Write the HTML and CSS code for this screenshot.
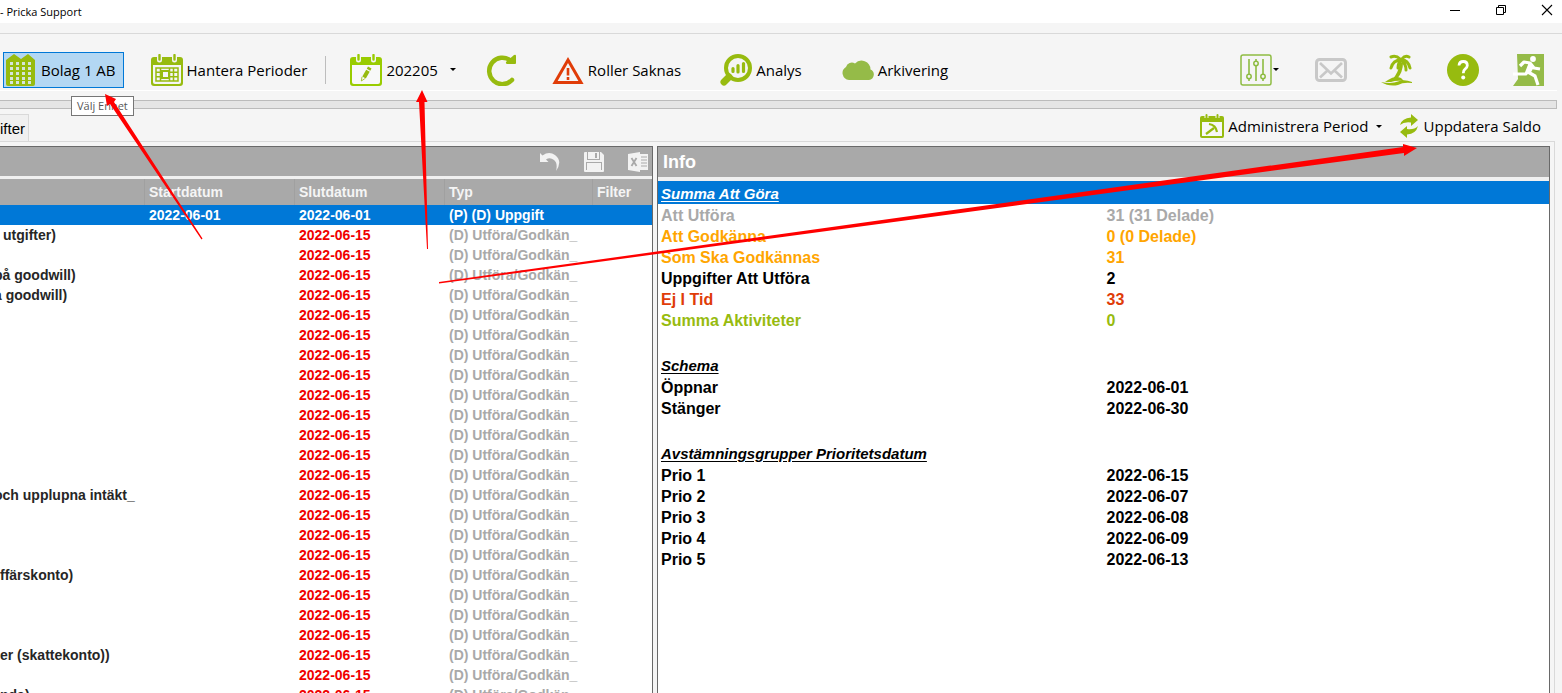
FILE: index.html
```
<!DOCTYPE html>
<html lang="sv">
<head>
<meta charset="utf-8">
<title>Pricka Support</title>
<link rel="stylesheet" href="styles.css">
</head>
<body>
<header class="titlebar">
  <span class="title">- Pricka Support</span>
  <div class="window-buttons">
    <button aria-label="Minimera"><svg width="12" height="12" viewBox="0 0 12 12"><path d="M1 6.500h10" stroke="#000"/></svg></button>
    <button aria-label="Återställ"><svg width="12" height="12" viewBox="0 0 12 12" fill="none" stroke="#000"><path d="M1.500 3.500h7v7h-7zM3.500 3.500v-2h7v7h-2"/></svg></button>
    <button aria-label="Stäng"><svg width="12" height="12" viewBox="0 0 12 12"><path d="M1 1l10 10M11 1L1 11" stroke="#000" stroke-width="1.100"/></svg></button>
  </div>
</header>
<div class="menu-strip"></div>
<nav class="toolbar">
  <div class="tools">
    <button class="tool active">
      <svg width="32" height="32" viewBox="0 0 32 32"><path fill="#97bb0f" d="M1 6l8-6 7 5 7-5 7 6v24q0 2-2 2H3q-2 0-2-2z"/><path d="M5 9.500h24M5 14.500h24M5 19.500h24M5 24.500h24M5 28.500h24" stroke="#d5e5dc" stroke-width="3" stroke-dasharray="3 3"/></svg>
      <span>Bolag 1 AB</span>
    </button>
    <button class="tool periods">
      <svg width="32" height="32" viewBox="0 0 32 32"><path fill="#97bb0f" d="M3 3h26q3 0 3 3v23q0 3-3 3H3q-3 0-3-3V6q0-3 3-3z"/><path fill="#f5f5f5" d="M2 11h28v17q0 2-2 2H4q-2 0-2-2z"/><path d="M8.500 1v5M23.500 1v5" stroke="#f5f5f5" stroke-width="5" stroke-linecap="round"/><path d="M8.500 1v4.500M23.500 1v4.500" stroke="#97bb0f" stroke-width="2.400" stroke-linecap="round"/><path fill="none" stroke="#97bb0f" stroke-width="1.500" d="M5 14h22v13H5zM5 18.300h22M5 22.700h22M9.500 14v13M22.500 14v13M18.500 14v13"/><path fill="#f5f5f5" stroke="#97bb0f" stroke-width="2" d="M11 17h7v7h-7z"/></svg>
      <span>Hantera Perioder</span>
    </button>
    <span class="divider"></span>
    <button class="tool month">
      <svg width="32" height="32" viewBox="0 0 32 32"><path fill="#99cc00" d="M3 3h26q3 0 3 3v23q0 3-3 3H3q-3 0-3-3V6q0-3 3-3z"/><path fill="#f8f8f8" d="M2 11h28v17q0 2-2 2H4q-2 0-2-2z"/><path d="M8.500 1v5M23.500 1v5" stroke="#f5f5f5" stroke-width="5" stroke-linecap="round"/><path d="M8.500 1v4.500M23.500 1v4.500" stroke="#99cc00" stroke-width="2.400" stroke-linecap="round"/><path fill="#97bb0f" d="M18 12.500l3.500 2-1.200 2.200-3.500-2zM16.200 15.800l3.500 2-3.900 6.600-3.500-2z"/><path fill="none" stroke="#97bb0f" stroke-width=".8" d="M12 22.800l-.7 4.200 3.600-2.400"/></svg>
      <span>202205</span>
      <i class="caret"></i>
    </button>
    <button class="tool reload" aria-label="Uppdatera"><svg width="32" height="32" viewBox="0 0 32 32"><path d="M24.500 6.500A13.200 13.200 0 1 0 26 26" fill="none" stroke="#97bb0f" stroke-width="4.500" stroke-linecap="round"/><path fill="#97bb0f" d="M28 1q2-1 2 1v7q0 1-1 1h-8q-2-1-.5-2.500z"/></svg></button>
    <button class="tool roles">
      <svg width="32" height="32" viewBox="0 0 32 32"><path d="M16 6L29 28.500H3z" fill="none" stroke="#e03c08" stroke-width="3"/><path d="M16 14v7.500M16 23v3" stroke="#e03c08" stroke-width="2.600"/></svg>
      <span>Roller Saknas</span>
    </button>
    <button class="tool analysis">
      <svg width="32" height="32" viewBox="0 0 32 32"><circle cx="18" cy="14" r="12" fill="none" stroke="#97bb0f" stroke-width="4"/><path d="M9 23l-5 5" stroke="#97bb0f" stroke-width="7" stroke-linecap="round"/><path d="M13 14.500v3M18 11.500v6.500M23.500 9.500v8" stroke="#97bb0f" stroke-width="3.200" stroke-linecap="round"/></svg>
      <span>Analys</span>
    </button>
    <button class="tool archive">
      <svg width="32" height="32" viewBox="0 0 32 32"><path fill="#95bb48" d="M7 26a7 7 0 0 1-3-13A6 6 0 0 1 13 9.500a9 9 0 0 1 15.500 6A5.500 5.500 0 0 1 27 26z"/></svg>
      <span>Arkivering</span>
    </button>
  </div>
  <div class="tools right">
    <button class="tool sliders" aria-label="Inställningar"><svg width="32" height="32" viewBox="0 0 32 32" fill="none" stroke="#8ebc42"><rect x="1" y="1" width="30" height="30" rx="2" stroke-width="1.500"/><path d="M9 5v15M9 25v2M16 5v2M16 12v15M23 5v15M23 25v2" stroke-width="1.600"/><g stroke-width="1.500"><circle cx="9" cy="22.500" r="2.200"/><circle cx="16" cy="9.500" r="2.200"/><circle cx="23" cy="22.500" r="2.200"/></g></svg><i class="caret"></i></button>
    <button class="tool" aria-label="Meddelanden"><svg width="32" height="32" viewBox="0 0 32 32"><rect x="1.500" y="5.500" width="29" height="21" rx="3" fill="none" stroke="#c8c8c8" stroke-width="3"/><path d="M5 9l11 10.500L27 9M5 23.500l7.500-7M27 23.500l-7.500-7" fill="none" stroke="#c8c8c8" stroke-width="2.600"/></svg></button>
    <button class="tool" aria-label="Frånvaro"><svg width="32" height="32" viewBox="0 0 32 32"><path fill="none" stroke="#97bb0f" stroke-width="3" stroke-linecap="round" d="M20 6Q12 6 10 14M21 6q6 0 8 8M19 5q-4-4-9-2M21 5q3-4 7-2M20 6q-3 3-3 8M21 7q4 3 4 9"/><path fill="#97bb0f" d="M19 8l3 1q0 9-6 16l-5 1q7-8 8-18z"/><path fill="#97bb0f" d="M7 26q7-5 13-2l3 3q-8-1-13 1H4zM0 28q11 2 17-.5t14 .5v1q-9-1-14 2-9 2-17-3z"/></svg></button>
    <button class="tool" aria-label="Hjälp"><svg width="32" height="32" viewBox="0 0 32 32"><circle cx="16" cy="16" r="16" fill="#97bb0f"/><path d="M12 11.500q.3-4 4.300-4 4 0 4 4 0 2-2.300 3.700-1.700 1.300-1.700 4" fill="none" stroke="#fff" stroke-width="2.800"/><circle cx="16.200" cy="23.500" r="2" fill="#fff"/></svg></button>
    <button class="tool exit" aria-label="Avsluta"><svg width="32" height="32" viewBox="0 0 32 32"><path fill="#95bb48" d="M4 0h27v32H0l5-7z"/><circle cx="20" cy="5" r="2.900" fill="#fff"/><path d="M7 12l4-4 6 1 4 5 6 1M17 10l-4 10H0M15 18l7 4 3 9" fill="none" stroke="#fff" stroke-width="3.200" stroke-linejoin="round"/><path d="M16 9l-3 9 4 2 4-7z" fill="#fff"/></svg></button>
  </div>
  <div class="tooltip" role="tooltip">Välj Enhet</div>
</nav>
<div class="splitter"></div>
<div class="tabstrip">
  <button class="tab">ifter</button>
  <div class="tab-tools">
    <button class="tool admin">
      <svg width="24" height="24" viewBox="0 0 24 24"><path fill="#97bb0f" d="M2 2h20q2 0 2 2v18q0 2-2 2H2q-2 0-2-2V4q0-2 2-2z"/><path fill="#f7f7f7" d="M2 8h20v14H2z"/><path d="M6.500 0v4M17.500 0v4" stroke="#f5f5f5" stroke-width="4"/><path d="M6.500 1v3M17.500 1v3" stroke="#97bb0f" stroke-width="2" stroke-linecap="round"/><path d="M6 20l8-6M9 10q7 1 8 8" fill="none" stroke="#97bb0f" stroke-width="2.200"/></svg>
      <span>Administrera Period</span>
      <i class="caret"></i>
    </button>
    <button class="tool">
      <svg width="20" height="24" viewBox="0 0 20 24"><path fill="#97bb0f" d="M12 0l7 6-7 6V8.500Q5 7.500 1 11 3 4 12 3.500zM8 24l-7-6 7-6v3q7 1 11-3-2 8-11 8.500z"/></svg>
      <span>Uppdatera Saldo</span>
    </button>
  </div>
</div>
<main class="page">
  <section class="panel">
    <div class="panel-bar icons">
      <button aria-label="Ångra"><svg width="20" height="20" viewBox="0 0 20 20"><path fill="#f2f2f2" d="M0 1l2.500 2.500Q9-1 15 3q8 6 1 16 2-8-2-11-4-3-8-.5L8.500 10H0z"/></svg></button>
      <button aria-label="Spara"><svg width="20" height="20" viewBox="0 0 20 20"><path fill="#f2f2f2" d="M0 1q0-1 1-1h16l3 3v16q0 1-1 1H1q-1 0-1-1z"/><path fill="#a9a9a9" d="M3 0h13v8H3zM2 10h16v8H2z"/><path fill="#f2f2f2" d="M4 0h11v7H4zM3 11h14v7H3z"/><path fill="#a9a9a9" d="M11 1h2v5h-2z"/></svg></button>
      <button aria-label="Exportera till Excel"><svg width="20" height="20" viewBox="0 0 20 20"><path fill="#f2f2f2" d="M0 2l12-2v20L0 18zM12 2h8v16h-8z"/><path d="M3.500 6l5 8M8.500 6l-5 8" stroke="#a9a9a9" stroke-width="1.800"/><path d="M13 5h6M13 8h6M13 11h6M13 14h6" stroke="#a9a9a9" stroke-width="1.200"/></svg></button>
    </div>
    <table class="tasks">
      <colgroup><col><col class="c-date"><col class="c-date"><col class="c-type"><col class="c-filter"></colgroup>
      <thead><tr><th></th><th>Startdatum</th><th>Slutdatum</th><th>Typ</th><th>Filter</th></tr></thead>
      <tbody id="rows"></tbody>
    </table>
  </section>
  <section class="panel info">
    <h1 class="panel-bar">Info</h1>
    <h2 class="selected"><span>Summa Att Göra</span></h2>
    <dl>
      <div class="gray"><dt>Att Utföra</dt><dd>31 (31 Delade)</dd></div>
      <div class="orange"><dt>Att Godkänna</dt><dd>0 (0 Delade)</dd></div>
      <div class="orange"><dt>Som Ska Godkännas</dt><dd>31</dd></div>
      <div><dt>Uppgifter Att Utföra</dt><dd>2</dd></div>
      <div class="late"><dt>Ej I Tid</dt><dd>33</dd></div>
      <div class="green"><dt>Summa Aktiviteter</dt><dd>0</dd></div>
    </dl>
    <h2><span>Schema</span></h2>
    <dl>
      <div><dt>Öppnar</dt><dd>2022-06-01</dd></div>
      <div><dt>Stänger</dt><dd>2022-06-30</dd></div>
    </dl>
    <h2><span>Avstämningsgrupper Prioritetsdatum</span></h2>
    <dl>
      <div><dt>Prio 1</dt><dd>2022-06-15</dd></div>
      <div><dt>Prio 2</dt><dd>2022-06-07</dd></div>
      <div><dt>Prio 3</dt><dd>2022-06-08</dd></div>
      <div><dt>Prio 4</dt><dd>2022-06-09</dd></div>
      <div><dt>Prio 5</dt><dd>2022-06-13</dd></div>
    </dl>
  </section>
</main>
<svg class="arrows" width="1562" height="693" viewBox="0 0 1562 693" fill="#f00">
  <path d="M105 94l2 12 3-2L201.500 239.500l1-1L114 102l2-3z"/>
  <path d="M422 90l-6 12h3L427 249h1L424.500 102h3z"/>
  <path d="M1417 148l-14-4v3L439 282v1.500L1404 153v3z"/>
</svg>
<script src="tasks.js"></script>
</body>
</html>
```
FILE: styles.css
```
* { box-sizing: border-box; }
body {
  margin: 0;
  height: 100vh;
  overflow: hidden;
  display: flex;
  flex-direction: column;
  position: relative;
  background: #f5f5f5;
  color: #000;
  font-family: "Liberation Sans", Arial, sans-serif;
}
button {
  border: 0;
  padding: 0;
  background: none;
  font: inherit;
  color: inherit;
}
svg { display: block; flex: none; }
.titlebar {
  display: flex;
  justify-content: space-between;
  height: 23px;
  background: #fff;
  font: 11px/24px "Open Sans", "Noto Sans", sans-serif;
}
.window-buttons { display: flex; gap: 34px; padding: 4px 9px 0 0; align-items: flex-start; }
.menu-strip { height: 11px; border-bottom: 1px solid #d9d9d9; }
.toolbar {
  position: relative;
  display: flex;
  justify-content: space-between;
  align-items: center;
  height: 57px;
  margin-right: 5px;
  padding-top: 16px;
  padding-bottom: 1px;
  border-bottom: 1px solid #fff;
}
.tools { display: flex; align-items: center; height: 36px; margin-left: 3px; }
.tool {
  display: flex;
  align-items: center;
  gap: 4px;
  font: 15px/24px "Open Sans", "Noto Sans", sans-serif;
  white-space: nowrap;
}
.active {
  height: 36px;
  padding: 0 7px 0 1px;
  background: #b3d7f3;
  border: 1px solid #0078d7;
}
.periods { margin-left: 27px; }
.divider { width: 1px; height: 28px; margin: 0 24px 0 18px; background: #bdbdbd; }
.caret {
  border: 3px solid transparent;
  border-top-color: #000;
  border-bottom: 0;
}
.month .caret { margin-left: 8px; }
.reload { margin-left: 30px; }
.roles { margin-left: 34px; }
.analysis { margin-left: 39px; }
.archive { margin-left: 40px; }
.right { gap: 34px; padding-right: 12px; }
.sliders { gap: 1px; margin-right: 2px; }
.tooltip {
  position: absolute;
  left: 71px;
  top: 62px;
  z-index: 1;
  height: 20px;
  padding: 0 5px;
  background: #fff;
  border: 1px solid #767676;
  color: #575757;
  font: 11px/18px "Open Sans", "Noto Sans", sans-serif;
}
.splitter {
  height: 9px;
  margin: 9px 5px 0 0;
  background: #e5e5e5;
  border: 1px solid #bbb;
  border-left: 0;
}
.tabstrip { display: flex; justify-content: space-between; height: 32px; padding-right: 21px; }
.tab {
  align-self: flex-end;
  height: 27px;
  padding: 0 3px 0 0;
  border: 1px solid #d9d9d9;
  border-width: 1px 1px 0 0;
  background: #f0f0f0;
  font-size: 15px;
}
.tab-tools { display: flex; gap: 17px; padding-top: 3px; }
.tab-tools .tool { height: 28px; }
.admin .caret { margin-left: 3px; }
.tab-tools .tool:last-child { gap: 5px; }
.page {
  flex: 1;
  min-height: 0;
  display: grid;
  grid-template-columns: 653fr 893fr;
  gap: 4px;
  margin-right: 7px;
  padding: 4px 4px 0 0;
  border: 1px solid #d9d9d9;
  border-width: 1px 1px 0 0;
}
.panel {
  min-width: 0;
  overflow: hidden;
  background: #fff;
  border: 1px solid #696969;
  border-width: 1px 1px 0 0;
}
.panel-bar {
  height: 30px;
  margin: 0;
  background: #a9a9a9;
  color: #fff;
  font-size: 18px;
  line-height: 31px;
}
.icons {
  display: flex;
  justify-content: flex-end;
  align-items: center;
  gap: 24px;
  height: 29px;
  padding-right: 4px;
}
.tasks {
  width: 100%;
  table-layout: fixed;
  border-collapse: separate;
  border-spacing: 0;
  border-top: 3px solid #f0f0f0;
  font-size: 14px;
  font-weight: bold;
  line-height: 20px;
}
.c-date { width: 150px; }
.c-type { width: 148px; }
.c-filter { width: 59px; }
.tasks th, .tasks td {
  height: 20px;
  padding: 0 4px;
  text-align: left;
  white-space: nowrap;
  overflow: hidden;
}
.tasks th { height: 26px; background: #a9a9a9; color: #f5f5f5; border-right: 1px solid #a0a0a0; }
.tasks td:first-child { padding: 0; color: #262626; }
.tasks td:nth-child(3) { color: #f00000; }
.tasks td:nth-child(4) { color: #a9a9a9; }
.tasks tr.current td { background: #0078d7; color: #fff; }
.clip { margin-left: -6px; }
.lead { margin-left: 3px; }
.info { border-left-width: 1px; }
.info h1 { height: 34px; padding-left: 5px; border-bottom: 4px solid #f0f0f0; }
.info h2 {
  height: 23px;
  margin: 0;
  padding-left: 3px;
  font-size: 15px;
  line-height: 25px;
  font-style: italic;
}
.info h2 span { text-decoration: underline; text-underline-offset: 2px; }
.info .selected { background: #0078d7; color: #fff; }
.info dl { margin: 0 0 23px; font-size: 16px; font-weight: bold; line-height: 23px; }
.info dl div { display: grid; grid-template-columns: 446fr 443fr; height: 21px; padding-left: 3px; }
.info dd { margin: 0; }
.gray { color: #a9a9a9; }
.orange { color: #ffa500; }
.late { color: #e03c08; }
.green { color: #97bb0f; }
.arrows { position: absolute; left: 0; top: 0; z-index: 2; pointer-events: none; }
```
FILE: tasks.js
```
const names = {
  1: ["utgifter)", "lead"],
  3: ["på goodwill)", "clip"],
  4: ["å goodwill)", "clip"],
  14: ["och upplupna intäkt_", "clip"],
  18: ["ffärskonto)", ""],
  22: ["er (skattekonto))", ""],
  24: ["nda)", ""]
};
const body = document.getElementById("rows");
for (let i = 0; i < 26; i++) {
  const row = body.insertRow();
  const label = document.createElement("div");
  if (names[i]) {
    label.textContent = names[i][0];
    label.className = names[i][1];
  }
  row.insertCell().append(label);
  row.insertCell().textContent = i ? "" : "2022-06-01";
  row.insertCell().textContent = i ? "2022-06-15" : "2022-06-01";
  row.insertCell().textContent = i ? "(D) Utföra/Godkän_" : "(P) (D) Uppgift";
  row.insertCell();
  if (!i) row.className = "current";
}
```
